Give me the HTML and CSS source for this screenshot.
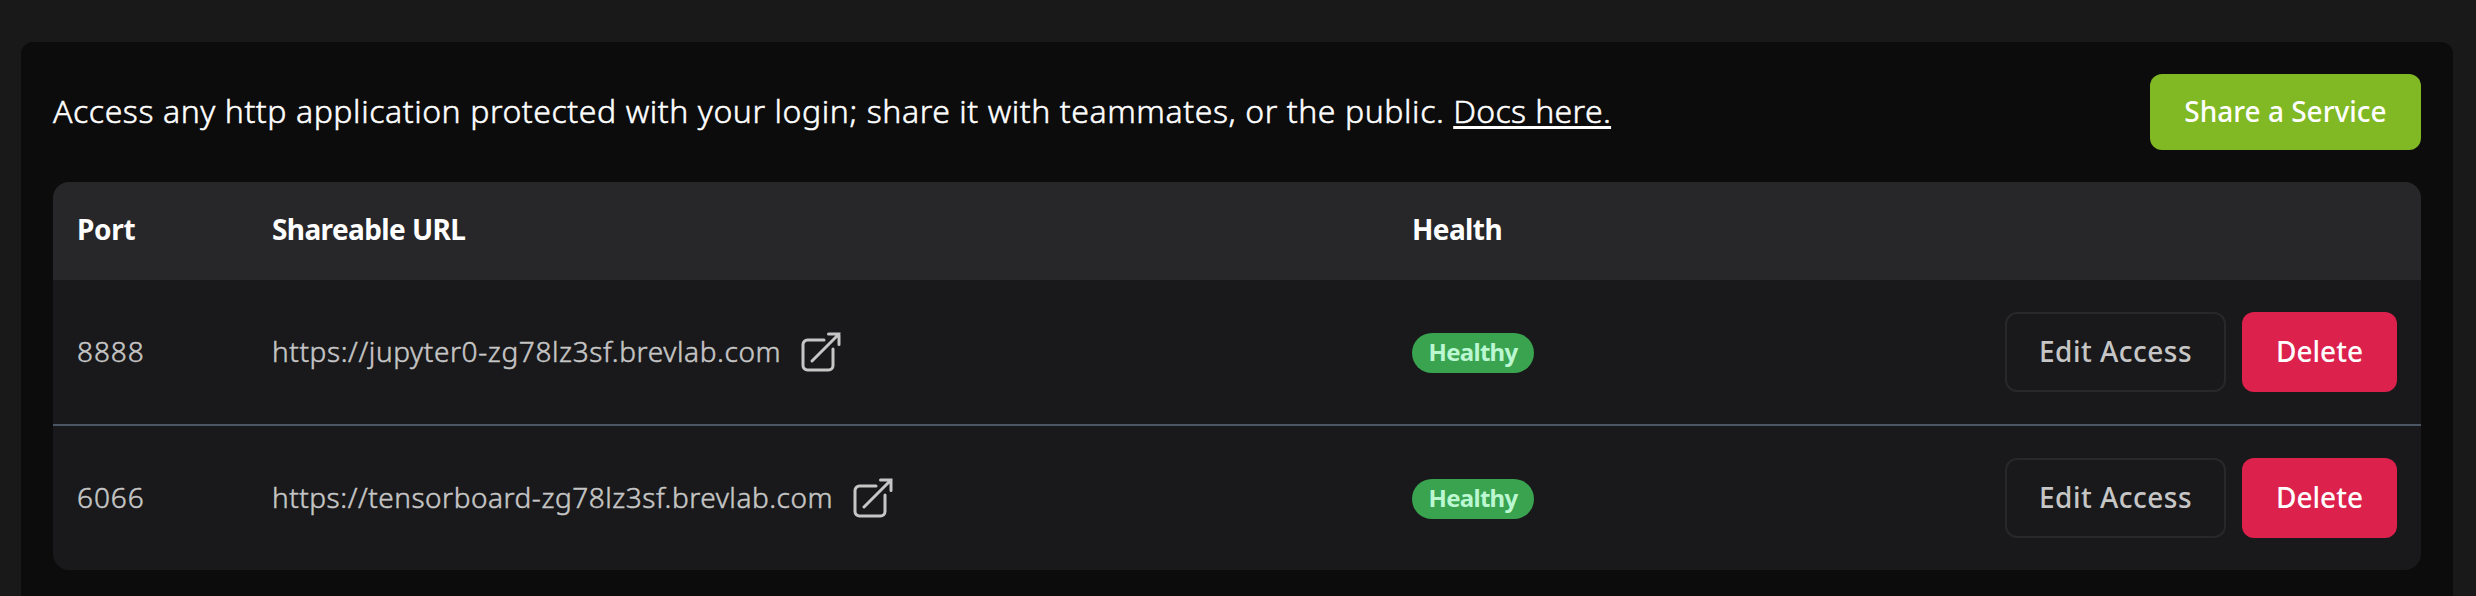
FILE: index.html
```
<!DOCTYPE html>
<html lang="en">
<head>
<meta charset="utf-8">
<title>Services</title>
<link rel="stylesheet" href="styles.css">
</head>
<body>
<main class="panel">
  <header class="intro">
    <p class="intro-text">Access any http application protected with your login; share it with teammates, or the public. <a class="docs" href="#">Docs here.</a></p>
    <button class="btn btn-share">Share a Service</button>
  </header>
  <section class="table">
    <div class="row head">
      <span class="h-port">Port</span>
      <span class="h-url">Shareable URL</span>
      <span class="h-health">Health</span>
    </div>
    <div class="row item">
      <span class="port">8888</span>
      <span class="url"><span class="url-text">https://jupyter0-zg78lz3sf.brevlab.com</span>
        <svg class="ext" viewBox="0 0 24 24"><path d="M13.5 6H5.25A2.25 2.25 0 0 0 3 8.25v10.5A2.25 2.25 0 0 0 5.25 21h10.5A2.25 2.25 0 0 0 18 18.75V10.5m-10.5 6L21 3M15.75 3H21v5.25"/></svg></span>
      <span class="health"><span class="badge">Healthy</span></span>
      <span class="actions"><button class="btn btn-edit">Edit Access</button><button class="btn btn-delete">Delete</button></span>
    </div>
    <div class="row item">
      <span class="port">6066</span>
      <span class="url"><span class="url-text url-long">https://tensorboard-zg78lz3sf.brevlab.com</span>
        <svg class="ext" viewBox="0 0 24 24"><path d="M13.5 6H5.25A2.25 2.25 0 0 0 3 8.25v10.5A2.25 2.25 0 0 0 5.25 21h10.5A2.25 2.25 0 0 0 18 18.75V10.5m-10.5 6L21 3M15.75 3H21v5.25"/></svg></span>
      <span class="health"><span class="badge">Healthy</span></span>
      <span class="actions"><button class="btn btn-edit">Edit Access</button><button class="btn btn-delete">Delete</button></span>
    </div>
  </section>
</main>
</body>
</html>
```
FILE: styles.css
```
* { box-sizing: border-box; }
html { height: 100%; overflow: hidden; }
body {
  margin: 0;
  height: 100%;
  padding: 42px 23px 0 21px;
  overflow: hidden;
  background: #191919;
  color: #fff;
  font-family: "Noto Sans", sans-serif;
  font-size: 28px;
  line-height: 40px;
  white-space: nowrap;
}
.panel {
  height: 554px;
  padding: 32px 32px 0;
  background: #0c0c0c;
  border-radius: 12px 12px 0 0;
}
.intro { display: flex; justify-content: space-between; height: 76px; margin-bottom: 32px; }
.intro-text { margin: 0; padding-top: 13px; font-size: 32px; line-height: 48px; font-weight: 300; letter-spacing: 0.57px; -webkit-text-stroke: 0.5px; }
.docs {
  color: #fff;
  letter-spacing: 0.35px;
  text-decoration: underline;
  text-decoration-thickness: 3px;
  text-underline-offset: 3px;
  text-decoration-skip-ink: none;
}
.btn {
  display: flex;
  align-items: center;
  justify-content: center;
  padding: 0 0 2px;
  border: 0;
  border-radius: 12px;
  color: #fff;
  font: 500 28px/40px "Noto Sans", sans-serif;
}
.btn-share { width: 271px; height: 76px; background: #80b923; }
.btn-edit { width: 221px; height: 80px; background: none; border: 2px solid #28282a; color: #c6c6c6; letter-spacing: 0.5px; }
.btn-delete { width: 155px; height: 80px; background: #db214c; }
.table { height: 388px; border-radius: 16px; overflow: hidden; background: #19191b; }
.row { display: grid; grid-template-columns: 195px 1140px 1fr auto; align-items: center; padding: 0 24px; }
.head { height: 98px; padding-bottom: 5px; background: #272729; font-weight: 700; letter-spacing: -0.6px; }
.h-port { letter-spacing: -0.3px; }
.item { height: 144px; color: #c6c6c6; font-weight: 300; }
.item + .item { height: 146px; border-top: 2px solid #4b5563; }
.port { padding-bottom: 3px; letter-spacing: 0.9px; -webkit-text-stroke: 0.5px; }
.url { display: flex; align-items: center; gap: 16px; }
.url-text { padding-bottom: 3px; letter-spacing: 0.61px; -webkit-text-stroke: 0.5px; }
.url-long { letter-spacing: 0.53px; }
.ext { width: 48px; height: 48px; fill: none; stroke: #c6c6c6; stroke-width: 1.5; stroke-linecap: round; }
.health { display: flex; }
.badge {
  display: flex;
  align-items: center;
  justify-content: center;
  width: 122px;
  height: 40px;
  margin-top: 2px;
  padding-bottom: 2px;
  border-radius: 20px;
  background: #39a34f;
  color: #bbf7d0;
  font-size: 24px;
  font-weight: 700;
  letter-spacing: -0.7px;
}
.actions { display: flex; gap: 16px; }
```
